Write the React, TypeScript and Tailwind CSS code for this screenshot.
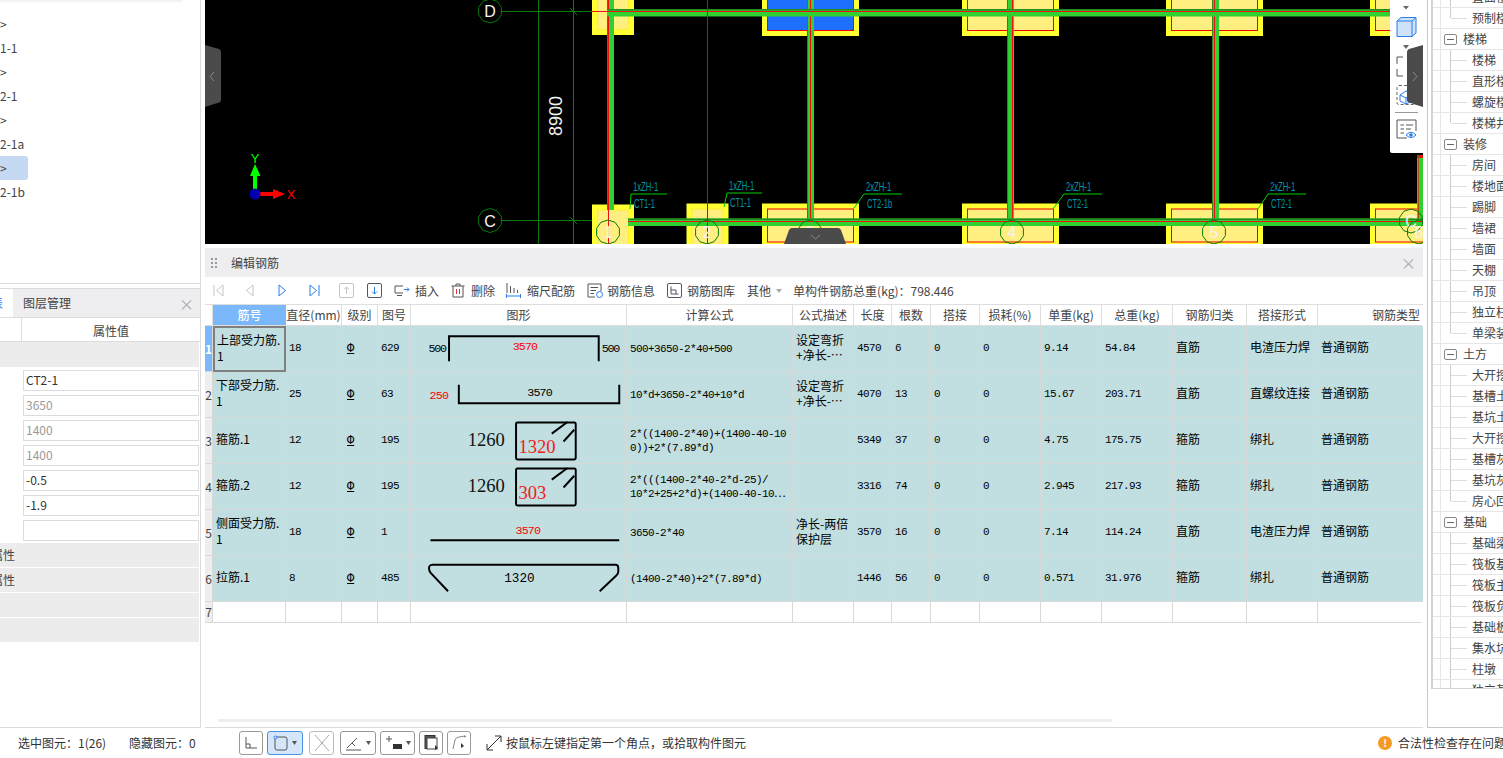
const cjk = "font-['Noto_Sans_CJK_SC',sans-serif]"
const mono = "font-['Liberation_Mono','Noto_Sans_CJK_SC',monospace]"
const gridCols =
  'grid grid-cols-[8px_73px_56px_36px_33px_216px_166px_61px_38px_39px_49px_61px_61px_71px_74px_71px_104px]'

function octagon(cx: number, cy: number, r: number) {
  const pts: string[] = []
  for (let i = 0; i < 10; i++) {
    const a = (Math.PI * 2 * i) / 10 + Math.PI / 10
    pts.push(`${(cx + r * Math.cos(a)).toFixed(1)},${(cy + r * Math.sin(a)).toFixed(1)}`)
  }
  return pts.join(' ')
}

function Pad({ x, y, w, h, fill = '#ffee80', small }: { x: number; y: number; w: number; h: number; fill?: string; small?: boolean }) {
  return (
    <g>
      <rect x={x} y={y} width={w} height={h} fill="#ffff33" />
      <rect
        x={x + 5.5}
        y={y + 5.5}
        width={w - 11}
        height={h - 11}
        fill={fill}
        stroke={small ? '#ffee33' : '#f00000'}
        strokeWidth="1"
      />
    </g>
  )
}

function Note({ x, y, top, bottom, lx, ly, ex }: { x: number; y: number; top: string; bottom: string; lx: number; ly: number; ex: number }) {
  return (
    <g>
      <polyline points={`${lx},${ly} ${x - 2},${y + 7} ${ex},${y + 7}`} fill="none" stroke="#00d000" strokeWidth="1" />
      <text x={x} y={y + 4} fill="#009aa6" fontSize="12" fontFamily="Liberation Sans" textLength={top.length * 4.2} lengthAdjust="spacingAndGlyphs">{top}</text>
      <text x={x + 1} y={y + 21} fill="#009aa6" fontSize="12" fontFamily="Liberation Sans" textLength={bottom.length * 4.2} lengthAdjust="spacingAndGlyphs">{bottom}</text>
    </g>
  )
}

function AxisMark({ cx, cy, label }: { cx: number; cy: number; label: string }) {
  return (
    <g>
      <polygon points={octagon(cx, cy, 12)} fill="none" stroke="#0a7a0a" strokeWidth="1" />
      <text x={cx} y={cy + 6} textAnchor="middle" fill="#f4f4f4" fontSize="16" fontFamily="Liberation Sans">{label}</text>
    </g>
  )
}

function CadCanvas() {
  const beamXs = [
    { x: 607, red: 608.5, end: 210 },
    { x: 807, red: 810.5, end: 219 },
    { x: 1007, red: 1012.5, end: 219 },
    { x: 1212, red: 1214.5, end: 219 },
  ]
  return (
    <svg viewBox="205 0 1218 244" className="block h-[244px] w-[1218px] bg-black">
      <Pad x={592} y={-6} w={42} h={41} small />
      <Pad x={762} y={-6} w={97} h={42} fill="#1f6fff" />
      <Pad x={962} y={-6} w={97} h={42} />
      <Pad x={1166} y={-6} w={97} h={42} />
      <Pad x={1370} y={-6} w={97} h={42} />
      <Pad x={592} y={204.5} w={42} h={46} small />
      <Pad x={686.5} y={203.5} w={42} h={46} small />
      <Pad x={762} y={203.5} w={97} h={44} />
      <Pad x={962} y={203.5} w={97} h={44} />
      <Pad x={1166} y={203.5} w={97} h={44} />
      <Pad x={1370} y={203.5} w={97} h={44} />

      {beamXs.map((b) => (
        <g key={b.x}>
          <rect x={b.x} y={0} width={7} height={b.end} fill="#2fd02f" />
          <rect x={b.x} y={0} width={1} height={b.end} fill="#228b22" />
          <line x1={b.red} y1={0} x2={b.red} y2={b.x === 607 ? 244 : 219} stroke="#f01010" strokeWidth="1" />
        </g>
      ))}
      <rect x={1417} y={155} width={6} height={70} fill="#2fd02f" />
      <rect x={1417} y={155} width={6} height={3} fill="#f01010" />
      <line x1={1418.5} y1={155} x2={1418.5} y2={225} stroke="#a05010" strokeWidth="1" />

      <rect x={607} y={9} width={816} height={7.5} fill="#2fd02f" />
      <rect x={607} y={9} width={816} height={1.5} fill="#228b22" />
      <line x1={590} y1={11.5} x2={1423} y2={11.5} stroke="#f01010" strokeWidth="1" />
      <rect x={628} y={218.5} width={795} height={7.5} fill="#2fd02f" />
      <rect x={628} y={218.5} width={795} height={1.5} fill="#228b22" />
      <line x1={628} y1={221.5} x2={1423} y2={221.5} stroke="#f01010" strokeWidth="1" />

      <line x1={707.5} y1={0} x2={707.5} y2={244} stroke="#c80c20" strokeWidth="1" />
      <line x1={501} y1={11.5} x2={592} y2={11.5} stroke="#0a7a0a" strokeWidth="1" />
      <line x1={501} y1={220.5} x2={592} y2={220.5} stroke="#0a7a0a" strokeWidth="1" />
      <line x1={538.5} y1={0} x2={538.5} y2={244} stroke="#0a7a0a" strokeWidth="1" />
      <line x1={573.5} y1={0} x2={573.5} y2={244} stroke="#0a7a0a" strokeWidth="1" />
      <line x1={570} y1={8} x2={577} y2={15} stroke="#0a7a0a" strokeWidth="1" />
      <line x1={570} y1={217} x2={577} y2={224} stroke="#0a7a0a" strokeWidth="1" />

      <text x={0} y={0} transform="translate(562 136) rotate(-90)" fill="#f0f0f0" fontSize="19" fontFamily="Liberation Sans" textLength="40" lengthAdjust="spacingAndGlyphs">8900</text>

      <AxisMark cx={490} cy={11} label="D" />
      <AxisMark cx={490} cy={220.5} label="C" />
      <AxisMark cx={608} cy={232} label="1" />
      <AxisMark cx={707} cy={232} label="2" />
      <AxisMark cx={810} cy={232} label="3" />
      <AxisMark cx={1012} cy={232} label="4" />
      <AxisMark cx={1214} cy={232} label="5" />
      <AxisMark cx={1411} cy={221} label="C" />
      <AxisMark cx={1419} cy={232} label="6" />

      <Note x={633} y={187} top="1xZH-1" bottom="CT1-1" lx={630} ly={209} ex={667} />
      <Note x={729} y={186} top="1xZH-1" bottom="CT1-1" lx={724} ly={207} ex={762} />
      <Note x={866} y={187} top="2xZH-1" bottom="CT2-1b" lx={854} ly={208} ex={902} />
      <Note x={1066} y={187} top="2xZH-1" bottom="CT2-1" lx={1053} ly={209} ex={1102} />
      <Note x={1270} y={187} top="2xZH-1" bottom="CT2-1" lx={1258} ly={209} ex={1306} />

      <rect x={253} y={175} width={4} height={18} fill="#00ff00" />
      <polygon points="255,164 260.5,176 250,176" fill="#00ff00" />
      <rect x={258} y={192} width={16} height={4} fill="#ff0000" />
      <polygon points="285,194 273,189 273,199" fill="#ff0000" />
      <circle cx={255} cy={194} r={5.5} fill="#0000b0" />
      <text x={255} y={163} textAnchor="middle" fill="#00ff00" fontSize="13" fontFamily="Liberation Sans">Y</text>
      <text x={291} y={199} textAnchor="middle" fill="#ff0000" fontSize="13" fontFamily="Liberation Sans">X</text>
    </svg>
  )
}

function ViewTools() {
  return (
    <div className="absolute right-0 top-0 h-[153px] w-[33px] rounded-bl-[2px] bg-white">
      <svg viewBox="0 0 33 153" className="block h-[153px] w-[33px]">
        <polygon points="13,6 19,6 16,9.5" fill="#666" />
        <path d="M7 21 L11 17.5 H26 V33 L22 36.5 H7 Z" fill="#cfe2fb" stroke="#2b7de9" />
        <path d="M7 21 H22 V36.5 M22 21 L26 17.5" fill="none" stroke="#2b7de9" />
        <polygon points="13,45 19,45 16,49" fill="#666" />
        <path d="M13 57 H7 V64 M7 69 V76 H13" fill="none" stroke="#555" />
        <rect x="7" y="85.5" width="21" height="19" rx="2" fill="none" stroke="#666" strokeDasharray="3 2" />
        <path d="M10 95 L16 91 L22 94 V101 L16 104 L10 101 Z M10 95 L16 98 V104 M16 98 L22 94" fill="none" stroke="#2b7de9" />
        <line x1="5" y1="112.5" x2="28" y2="112.5" stroke="#999" />
        <path d="M26 131 V120 H7 V138 H17" fill="none" stroke="#555" />
        <path d="M10.5 125 H14 M16 125 H23 M10.5 129 H14 M16 129 H21 M10.5 133 H14" stroke="#555" />
        <path d="M16 135 Q21 129.5 26 135 Q21 140 16 135 Z" fill="#fff" stroke="#2b7de9" />
        <circle cx="21" cy="135" r="1.8" fill="#2b7de9" />
      </svg>
    </div>
  )
}

function CanvasTabs() {
  return (
    <>
      <svg viewBox="0 0 16 62" className="absolute left-0 top-[45px] h-[62px] w-[16px]">
        <path d="M0 0 L14 4 Q16 5 16 7 V55 Q16 57 14 57.5 L0 62 Z" fill="#4b4b4b" />
        <path d="M9 27 L5 31.5 L9 36" fill="none" stroke="#8a8a8a" />
      </svg>
      <svg viewBox="0 0 16 62" className="absolute right-0 top-[45px] h-[62px] w-[16px]">
        <path d="M16 0 L2 4 Q0 5 0 7 V55 Q0 57 2 57.5 L16 62 Z" fill="#4b4b4b" />
        <path d="M6 27 L10 31.5 L6 36" fill="none" stroke="#8a8a8a" />
      </svg>
      <svg viewBox="0 0 62 16" className="absolute bottom-0 left-[579px] h-[16px] w-[62px]">
        <path d="M0 16 L5 2 Q6 0 8 0 H54 Q56 0 57 2 L62 16 Z" fill="#4b4b4b" />
        <path d="M27 7 L31.5 11 L36 7" fill="none" stroke="#8a8a8a" />
      </svg>
    </>
  )
}

function ToolItem({ icon, label, className }: { icon: React.ReactNode; label: string; className: string }) {
  return (
    <div className={`flex items-center ${className}`}>
      {icon}
      <span className="whitespace-nowrap text-[12px] text-[#444]">{label}</span>
    </div>
  )
}

function EditToolbar() {
  return (
    <div className={`flex h-[28px] items-center border-b border-[#dedede] bg-white pl-[8px] ${cjk}`}>
      <svg viewBox="0 0 11 13" className="h-[13px] w-[11px]"><path d="M1 1 V12 M10 1 L3.5 6.5 L10 12 Z" fill="none" stroke="#c4c4c4" /></svg>
      <svg viewBox="0 0 10 13" className="ml-[21px] h-[13px] w-[10px]"><path d="M8 1 L1.5 6.5 L8 12 Z" fill="none" stroke="#c4c4c4" /></svg>
      <svg viewBox="0 0 10 13" className="ml-[22px] h-[13px] w-[10px]"><path d="M2 1 L8.5 6.5 L2 12 Z" fill="none" stroke="#2b7de9" /></svg>
      <svg viewBox="0 0 11 13" className="ml-[22px] h-[13px] w-[11px]"><path d="M1 1 L7.5 6.5 L1 12 Z M10 1 V12" fill="none" stroke="#2b7de9" /></svg>
      <svg viewBox="0 0 15 15" className="ml-[19px] h-[15px] w-[15px]"><rect x="0.5" y="0.5" width="14" height="14" rx="1.5" fill="none" stroke="#c4c4c4" /><path d="M7.5 11 V4 M5 6.5 L7.5 4 L10 6.5" fill="none" stroke="#c4c4c4" /></svg>
      <svg viewBox="0 0 15 15" className="ml-[13px] h-[15px] w-[15px]"><rect x="0.5" y="0.5" width="14" height="14" rx="1.5" fill="none" stroke="#556" /><path d="M7.5 4 V11 M5 8.5 L7.5 11 L10 8.5" fill="none" stroke="#2b7de9" /></svg>
      <ToolItem
        className="ml-[12px]"
        label="插入"
        icon={<svg viewBox="0 0 16 12" className="mr-[5px] h-[12px] w-[16px]"><path d="M9 1 H1 V8 H9" fill="none" stroke="#555" /><path d="M3 10.5 H8" stroke="#555" /><path d="M10 4.5 H15 M13 2.5 L15 4.5 L13 6.5" fill="none" stroke="#2b7de9" /></svg>}
      />
      <ToolItem
        className="ml-[12px]"
        label="删除"
        icon={<svg viewBox="0 0 14 15" className="mr-[6px] h-[15px] w-[14px]"><path d="M0.5 3 H13.5 M5 3 V1 H9 V3 M2 3 V14 H12 V3" fill="none" stroke="#555" /><path d="M5.5 6 V11 M8.5 6 V11" stroke="#d33" /></svg>}
      />
      <ToolItem
        className="ml-[11px]"
        label="缩尺配筋"
        icon={<svg viewBox="0 0 15 15" className="mr-[6px] h-[15px] w-[15px]"><path d="M1 0 V10 M4.5 3 V10 M8 5 V10 M11.5 7 V10" stroke="#555" /><path d="M0 13 H15 M0.5 11 V15 M14.5 11 V15" stroke="#2b7de9" /></svg>}
      />
      <ToolItem
        className="ml-[12px]"
        label="钢筋信息"
        icon={<svg viewBox="0 0 16 15" className="mr-[4px] h-[15px] w-[16px]"><path d="M14 8 V1 H1 V14 H8" fill="none" stroke="#555" /><path d="M3.5 4.5 H11 M3.5 7.5 H9 M3.5 10.5 H7" stroke="#555" /><circle cx="12.5" cy="11.5" r="3" fill="none" stroke="#2b7de9" /></svg>}
      />
      <ToolItem
        className="ml-[12px]"
        label="钢筋图库"
        icon={<svg viewBox="0 0 15 15" className="mr-[5px] h-[15px] w-[15px]"><rect x="0.5" y="0.5" width="14" height="14" rx="1.5" fill="none" stroke="#556" /><path d="M4 3.5 V11 H11.5 M4 7 H9 V11" fill="none" stroke="#556" /></svg>}
      />
      <span className="ml-[12px] whitespace-nowrap text-[12px] text-[#444]">其他</span>
      <svg viewBox="0 0 6 4" className="ml-[5px] h-[4px] w-[6px]"><polygon points="0,0 6,0 3,4" fill="#aaa" /></svg>
      <span className="ml-[11px] whitespace-nowrap text-[12px] text-[#444]">单构件钢筋总重(kg)：798.446</span>
    </div>
  )
}

const headers = ['筋号', '直径(mm)', '级别', '图号', '图形', '计算公式', '公式描述', '长度', '根数', '搭接', '损耗(%)', '单重(kg)', '总重(kg)', '钢筋归类', '搭接形式']

function ShapeOne() {
  return (
    <svg viewBox="0 0 216 46" className="block h-[45px] w-[215px]">
      <path d="M37 36 V10.5 H190 V36" fill="none" stroke="#000" strokeWidth="2" />
      <text x="16" y="27" fontSize="12" fill="#000" fontFamily="Liberation Mono" textLength="19">500</text>
      <text x="102" y="25" fontSize="12" fill="#f00" fontFamily="Liberation Mono" textLength="26">3570</text>
      <text x="193" y="27" fontSize="12" fill="#000" fontFamily="Liberation Mono" textLength="19">500</text>
    </svg>
  )
}

function ShapeTwo() {
  return (
    <svg viewBox="0 0 216 46" className="block h-[45px] w-[215px]">
      <path d="M47 13 V32 H211 V13" fill="none" stroke="#000" strokeWidth="2" />
      <text x="17" y="28" fontSize="12" fill="#f00" fontFamily="Liberation Mono" textLength="20">250</text>
      <text x="117" y="25" fontSize="12" fill="#000" fontFamily="Liberation Mono" textLength="26">3570</text>
    </svg>
  )
}

function ShapeHoop({ red }: { red: string }) {
  return (
    <svg viewBox="0 0 216 46" className="block h-[45px] w-[215px]">
      <rect x="105.5" y="4.5" width="61" height="38" rx="1.5" fill="none" stroke="#000" strokeWidth="2" />
      <path d="M142 16 L158 4 M154 24 L165 12" fill="none" stroke="#000" strokeWidth="2" />
      <text x="56" y="29" fontSize="19" fill="#111" fontFamily="Liberation Serif">1260</text>
      <text x="108" y="36" fontSize="19" fill="#f02020" fontFamily="Liberation Serif">{red}</text>
    </svg>
  )
}

function ShapeLine() {
  return (
    <svg viewBox="0 0 216 46" className="block h-[45px] w-[215px]">
      <line x1="18" y1="31" x2="211" y2="31" stroke="#000" strokeWidth="2" />
      <text x="105" y="25" fontSize="12" fill="#f00" fontFamily="Liberation Mono" textLength="26">3570</text>
    </svg>
  )
}

function ShapeTie() {
  return (
    <svg viewBox="0 0 216 46" className="block h-[45px] w-[215px]">
      <path d="M36 36 L18 17 Q16 14 16.7 11 Q17.5 9 20 9 H207 Q210 9 210 12 V16 Q210 18 208 20 L191 36" fill="none" stroke="#000" strokeWidth="2" />
      <text x="109" y="27" textAnchor="middle" fontSize="13" fill="#000" fontFamily="Liberation Mono">1320</text>
    </svg>
  )
}

const rows = [
  { name: '上部受力筋.1', dia: '18', no: '629', shape: <ShapeOne />, formula: ['500+3650-2*40+500'], desc: ['设定弯折', '+净长-⋯'], len: '4570', qty: '6', unit: '9.14', total: '54.84', kind: '直筋', join: '电渣压力焊', type: '普通钢筋' },
  { name: '下部受力筋.1', dia: '25', no: '63', shape: <ShapeTwo />, formula: ['10*d+3650-2*40+10*d'], desc: ['设定弯折', '+净长-⋯'], len: '4070', qty: '13', unit: '15.67', total: '203.71', kind: '直筋', join: '直螺纹连接', type: '普通钢筋' },
  { name: '箍筋.1', dia: '12', no: '195', shape: <ShapeHoop red="1320" />, formula: ['2*((1400-2*40)+(1400-40-10', '0))+2*(7.89*d)'], desc: [], len: '5349', qty: '37', unit: '4.75', total: '175.75', kind: '箍筋', join: '绑扎', type: '普通钢筋' },
  { name: '箍筋.2', dia: '12', no: '195', shape: <ShapeHoop red="303" />, formula: ['2*(((1400-2*40-2*d-25)/', '10*2+25+2*d)+(1400-40-10⋯'], desc: [], len: '3316', qty: '74', unit: '2.945', total: '217.93', kind: '箍筋', join: '绑扎', type: '普通钢筋' },
  { name: '侧面受力筋.1', dia: '18', no: '1', shape: <ShapeLine />, formula: ['3650-2*40'], desc: ['净长-两倍', '保护层'], len: '3570', qty: '16', unit: '7.14', total: '114.24', kind: '直筋', join: '电渣压力焊', type: '普通钢筋' },
  { name: '拉筋.1', dia: '8', no: '485', shape: <ShapeTie />, formula: ['(1400-2*40)+2*(7.89*d)'], desc: [], len: '1446', qty: '56', unit: '0.571', total: '31.976', kind: '箍筋', join: '绑扎', type: '普通钢筋' },
]

const cell = 'flex items-center overflow-hidden border-r border-b border-[#d8d8d8] pl-[3px] text-[12px] text-black'
const textCell = `${cell} pb-[4px]`
const numCell = `${cell} ${mono} !text-[11px] tracking-[-0.6px]`

function RebarTable() {
  return (
    <div className={`flex-1 bg-white ${cjk}`}>
      <div className={`${gridCols} h-[21px] text-[12px] text-[#444]`}>
        <div className="border-r border-b border-[#dedede]" />
        {headers.map((h, i) => (
          <div
            key={h}
            className={
              i === 0
                ? 'flex items-center justify-center border-b border-[#dedede] bg-[#7ab8fb] font-medium text-white'
                : 'flex items-center justify-center whitespace-nowrap border-r border-b border-[#dedede]'
            }
          >
            {h}
          </div>
        ))}
        <div className="flex items-center justify-end border-b border-[#dedede] pr-[2px]">钢筋类型</div>
      </div>
      {rows.map((r, i) => (
        <div key={i} className={`${gridCols} h-[46px] bg-[#c1dee0]`}>
          <div
            className={
              i === 0
                ? 'flex items-center justify-center border-r border-b border-[#d8d8d8] bg-[#7ab8fb] text-[12px] font-bold text-white'
                : 'flex items-center justify-center border-r border-b border-[#d8d8d8] bg-[#eeeeee] text-[12px] text-[#444]'
            }
          >
            {i + 1}
          </div>
          <div className={i === 0 ? 'flex items-center border-2 border-[#808080] pb-[2px] pl-[2px] text-[12px] leading-[16px] text-black' : `${textCell} leading-[16px]`}>
            <span className="break-all">{r.name}</span>
          </div>
          <div className={numCell}>{r.dia}</div>
          <div className={`${cell} ${mono} pl-[5px] !text-[12px] underline`}>Φ</div>
          <div className={numCell}>{r.no}</div>
          <div className="overflow-hidden border-r border-b border-[#d8d8d8]">{r.shape}</div>
          <div className={`${numCell} leading-[14px] whitespace-nowrap`}>
            <div>
              {r.formula.map((f) => (
                <div key={f}>{f}</div>
              ))}
            </div>
          </div>
          <div className={`${textCell} leading-[15px] whitespace-nowrap`}>
            <div>
              {r.desc.map((d) => (
                <div key={d}>{d}</div>
              ))}
            </div>
          </div>
          <div className={numCell}>{r.len}</div>
          <div className={numCell}>{r.qty}</div>
          <div className={numCell}>0</div>
          <div className={numCell}>0</div>
          <div className={numCell}>{r.unit}</div>
          <div className={numCell}>{r.total}</div>
          <div className={textCell}>{r.kind}</div>
          <div className={`${textCell} whitespace-nowrap`}>{r.join}</div>
          <div className="flex items-center border-b border-[#d8d8d8] pb-[4px] pl-[3px] text-[12px] text-black">{r.type}</div>
        </div>
      ))}
      <div className={`${gridCols} h-[21px]`}>
        <div className="flex items-center justify-center border-r border-b border-[#d8d8d8] bg-[#eeeeee] text-[12px] text-[#444]">7</div>
        {Array.from({ length: 15 }).map((_, i) => (
          <div key={i} className="border-r border-b border-[#d8d8d8]" />
        ))}
        <div className="border-b border-[#d8d8d8]" />
      </div>
    </div>
  )
}

function LeftPanel() {
  const tree = ['>', '1-1', '>', '2-1', '>', '2-1a', '>', '2-1b']
  const fields = [
    { v: 'CT2-1', c: 'text-[#333]' },
    { v: '3650', c: 'text-[#999]' },
    { v: '1400', c: 'text-[#999]' },
    { v: '1400', c: 'text-[#999]' },
    { v: '-0.5', c: 'text-[#333]' },
    { v: '-1.9', c: 'text-[#333]' },
    { v: '', c: '' },
  ]
  return (
    <div className={`flex h-[728px] w-[201px] shrink-0 flex-col border-r border-b border-[#dcdcdc] bg-white ${cjk}`}>
      <div className="h-[284px] shrink-0 border-b border-[#dcdcdc]">
        <div className="h-[2px] w-[183px] rounded-br-[3px] bg-[#f3f3f3]" />
        <div className="pt-[10px]">
          {tree.map((t, i) => (
            <div
              key={i}
              className={
                i === 6
                  ? 'flex h-[24px] w-[28px] items-center rounded-r-[3px] bg-[#c5daf2] text-[12px] text-[#444]'
                  : 'flex h-[24px] items-center text-[12px] text-[#444]'
              }
            >
              {t}
            </div>
          ))}
        </div>
      </div>
      <div className="mt-[4px] flex h-[30px] shrink-0 items-center border-y border-[#dcdcdc] bg-[#eeeef0] text-[12px] text-[#444]">
        <div className="flex h-full w-[13px] items-center overflow-hidden bg-white text-[#2b7de9]">
          <span className="-ml-[9px]">表</span>
        </div>
        <span className="ml-[10px]">图层管理</span>
        <span className="ml-auto mr-[6px] text-[15px] leading-none text-[#aaa]">×</span>
      </div>
      <div className="flex h-[24px] shrink-0 border-b border-[#dcdcdc] text-[12px] text-[#444]">
        <div className="w-[22px] border-r border-[#dcdcdc]" />
        <div className="flex flex-1 items-center justify-center pt-[2px]">属性值</div>
      </div>
      <div className="mr-px h-[25px] shrink-0 bg-[#ececec]" />
      <div className="flex flex-col gap-[4px] pb-[2px] pl-[23px] pr-[1px] pt-[3px]">
        {fields.map((f, i) => (
          <div key={i} className={`flex h-[21px] items-center border border-[#dcdcdc] bg-white pb-[2px] pl-[2px] text-[12px] ${f.c}`}>
            {f.v}
          </div>
        ))}
      </div>
      {['属性', '属性', '', ''].map((t, i) => (
        <div key={i} className="mb-px mr-px flex h-[24px] shrink-0 items-center overflow-hidden bg-[#ececec] text-[12px] text-[#444]">
          <span className="-ml-[9px]">{t}</span>
        </div>
      ))}
    </div>
  )
}

type TreeRow = { t: string; group?: boolean; last?: boolean }

const treeRows: TreeRow[] = [
  { t: '直面楼' }, { t: '预制楼', last: true },
  { t: '楼梯', group: true }, { t: '楼梯' }, { t: '直形楼' }, { t: '螺旋楼' }, { t: '楼梯井', last: true },
  { t: '装修', group: true }, { t: '房间' }, { t: '楼地面' }, { t: '踢脚' }, { t: '墙裙' }, { t: '墙面' }, { t: '天棚' }, { t: '吊顶' }, { t: '独立柱' }, { t: '单梁装', last: true },
  { t: '土方', group: true }, { t: '大开挖' }, { t: '基槽土' }, { t: '基坑土' }, { t: '大开挖' }, { t: '基槽灰' }, { t: '基坑灰' }, { t: '房心回', last: true },
  { t: '基础', group: true }, { t: '基础梁' }, { t: '筏板基' }, { t: '筏板主' }, { t: '筏板负' }, { t: '基础板' }, { t: '集水坑' }, { t: '柱墩' }, { t: '独立基' },
]

function RightPanel() {
  return (
    <div className={`h-[728px] w-[80px] shrink-0 pl-[4px] ${cjk}`}>
      <div className="h-full border-b border-l border-[#c8c8c8] pl-[3px]">
        <div className="h-[689px] w-[90px] overflow-hidden border-b border-l-2 border-[#d4d4d4]">
          <div className="-mt-[13px]">
            {treeRows.map((r, i) => (
              <div key={i} className="flex h-[21px] items-center border-b border-[#e6e6e6] text-[12px] text-[#444]">
                <div className="h-full w-[8px] shrink-0 border-r border-[#e6e6e6]" />
                {r.group ? (
                  <>
                    <div className="ml-[3px] flex h-[11px] w-[13px] shrink-0 items-center justify-center rounded-[2px] border border-[#888]">
                      <div className="h-px w-[7px] bg-[#666]" />
                    </div>
                    <span className="ml-[6px] whitespace-nowrap">{r.t}</span>
                  </>
                ) : (
                  <>
                    <div className={r.last ? 'ml-[9px] h-1/2 w-px shrink-0 self-start bg-[#cccccc]' : 'ml-[9px] h-full w-px shrink-0 bg-[#cccccc]'} />
                    <div className="h-px w-[16px] shrink-0 bg-[#dddddd]" />
                    <span className="ml-[5px] whitespace-nowrap">{r.t}</span>
                  </>
                )}
              </div>
            ))}
          </div>
        </div>
      </div>
    </div>
  )
}

const statusBtn = 'flex h-[24px] items-center justify-center rounded-[3px] border border-[#999] bg-white'

function StatusBar() {
  return (
    <div className={`flex h-[30px] shrink-0 items-center bg-white text-[12px] text-[#333] [&>*]:shrink-0 ${cjk}`}>
      <span className="ml-[18px] w-[111px] whitespace-nowrap">选中图元：1(26)</span>
      <span className="w-[110px] whitespace-nowrap">隐藏图元：0</span>
      <div className={`${statusBtn} w-[24px]`}>
        <svg viewBox="0 0 16 16" className="h-[16px] w-[16px]"><path d="M3 2 V13 H14 M3 9 H7 V13" fill="none" stroke="#555" /></svg>
      </div>
      <div className="ml-[4px] flex h-[24px] w-[36px] items-center justify-center gap-[3px] rounded-[3px] border border-[#4a90e2] bg-[#d6e6fa]">
        <svg viewBox="0 0 16 18" className="h-[18px] w-[16px]"><rect x="2" y="3" width="12" height="13" rx="2" fill="none" stroke="#555" /><circle cx="2.5" cy="3.5" r="1.5" fill="#d6e6fa" stroke="#2b7de9" /></svg>
        <svg viewBox="0 0 5 4" className="h-[4px] w-[5px]"><polygon points="0,0 5,0 2.5,4" fill="#555" /></svg>
      </div>
      <div className={`${statusBtn} ml-[6px] w-[25px] border-[#bbb]`}>
        <svg viewBox="0 0 18 20" className="h-[20px] w-[18px]"><path d="M2 2 L16 18 M16 2 L2 18" stroke="#aaa" /></svg>
      </div>
      <div className={`${statusBtn} ml-[6px] w-[36px] gap-[3px]`}>
        <svg viewBox="0 0 18 16" className="h-[16px] w-[18px]"><path d="M2 13 L12 3" stroke="#555" /><path d="M1 15 H16" stroke="#aaa" strokeWidth="2" /><path d="M7 8 L10 11" stroke="#555" /></svg>
        <svg viewBox="0 0 5 4" className="h-[4px] w-[5px]"><polygon points="0,0 5,0 2.5,4" fill="#555" /></svg>
      </div>
      <div className={`${statusBtn} ml-[4px] w-[35px] gap-[3px]`}>
        <svg viewBox="0 0 18 16" className="h-[16px] w-[18px]"><path d="M1 4 H7 M4 1 V7" stroke="#555" /><rect x="8" y="9" width="9" height="5" fill="#333" /></svg>
        <svg viewBox="0 0 5 4" className="h-[4px] w-[5px]"><polygon points="0,0 5,0 2.5,4" fill="#555" /></svg>
      </div>
      <div className={`${statusBtn} ml-[4px] w-[24px]`}>
        <svg viewBox="0 0 16 18" className="h-[18px] w-[16px]"><rect x="2" y="1.5" width="10" height="13" fill="#555" stroke="#333" /><rect x="4" y="4" width="10" height="11" fill="#fff" stroke="#444" /><path d="M12 11 L15 14 L12 16 Z" fill="#333" /></svg>
      </div>
      <div className={`${statusBtn} ml-[4px] w-[24px]`}>
        <svg viewBox="0 0 18 18" className="h-[18px] w-[18px]"><path d="M3 15 L5 6 Q6 3 9 3 L15 2" fill="none" stroke="#888" /><circle cx="15" cy="2.5" r="1" fill="#888" /><polygon points="11,9 14,12 11,14" fill="#333" /></svg>
      </div>
      <svg viewBox="0 0 16 16" className="ml-[15px] h-[16px] w-[16px]"><path d="M1 15 L15 1 M9 1 H15 V7 M1 9 V15 H7" fill="none" stroke="#333" /></svg>
      <span className="ml-[4px] whitespace-nowrap">按鼠标左键指定第一个角点，或拾取构件图元</span>
      <div className="ml-[632px] flex h-[14px] w-[14px] items-center justify-center rounded-full bg-[#f59a23] text-[10px] font-bold leading-none text-white">!</div>
      <span className="ml-[6px] whitespace-nowrap">合法性检查存在问题</span>
    </div>
  )
}

export default function App() {
  return (
    <div className="flex h-[758px] w-[1503px] flex-col overflow-hidden bg-white">
      <div className="flex h-[728px] shrink-0">
        <LeftPanel />
        <div className="ml-[4px] flex h-[728px] w-[1218px] shrink-0 flex-col border-b border-[#dcdcdc]">
          <div className="relative h-[244px] shrink-0 overflow-hidden">
            <CadCanvas />
            <ViewTools />
            <CanvasTabs />
          </div>
          <div className={`mt-[4px] flex h-[29px] shrink-0 items-center bg-[#eeeef0] ${cjk}`}>
            <div className="ml-[6px] grid grid-cols-2 gap-[2px]">
              {Array.from({ length: 6 }).map((_, i) => (
                <div key={i} className="h-[2px] w-[2px] bg-[#999]" />
              ))}
            </div>
            <span className="ml-[14px] text-[12px] text-[#444]">编辑钢筋</span>
            <span className="ml-auto mr-[7px] text-[15px] leading-none text-[#aaa]">×</span>
          </div>
          <EditToolbar />
          <RebarTable />
          <div className="mb-[5px] ml-[13px] h-[3px] w-[894px] shrink-0 rounded-full bg-[#eeeeee]" />
        </div>
        <RightPanel />
      </div>
      <StatusBar />
    </div>
  )
}
